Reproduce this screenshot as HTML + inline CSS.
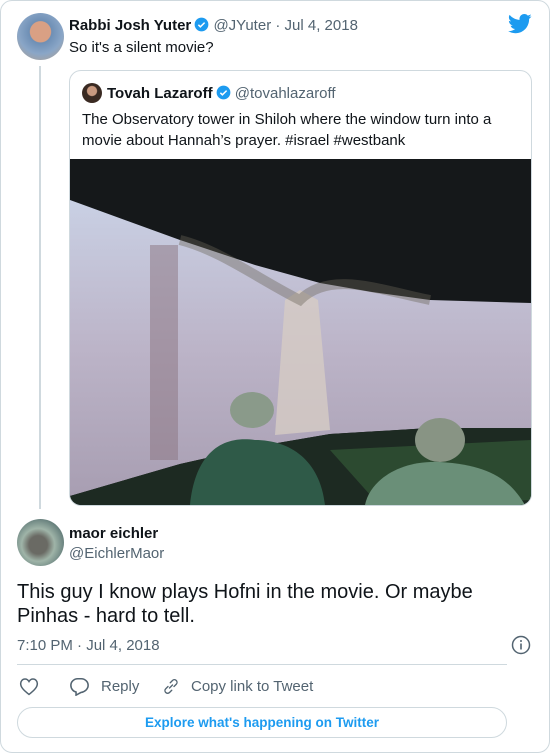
<!DOCTYPE html>
<html><head><meta charset="utf-8"><style>
*{margin:0;padding:0;box-sizing:border-box}
body{width:550px;height:755px;background:#fff;font-family:"Liberation Sans",Arial,sans-serif;color:#0f1419;position:relative;overflow:hidden}
.card{position:absolute;left:0;top:0;width:550px;height:753px;border:1px solid #cfd9de;border-radius:12px}
.abs{position:absolute;white-space:nowrap}
.av{position:absolute;border-radius:50%;overflow:hidden}
.gray{color:#536471}
.ver{display:inline-block;width:15px;height:15px;vertical-align:-2px;margin-left:3px}
</style></head><body>
<div class="card"></div>
<div class="av" style="left:17px;top:13px;width:47px;height:47px;background:radial-gradient(circle at 50% 40%,#d9a084 0 28%,#6e8fb5 30%,#8aa6c7 60%,#b5a089 100%)"></div>
<div class="abs" style="left:69px;top:17px;font-size:15px"><b>Rabbi Josh Yuter</b><svg class="ver" viewBox="0 0 24 24"><circle cx="12" cy="12" r="11" fill="#1d9bf0"/><path d="M7 12.5l3.2 3.2L17 9" stroke="#fff" stroke-width="2.4" fill="none"/></svg> <span class="gray">@JYuter · Jul 4, 2018</span></div>
<div class="abs" style="left:69px;top:39px;font-size:15px">So it's a silent movie?</div>
<svg class="abs" style="left:508px;top:14px" width="24" height="20" viewBox="0 0 24 20"><path fill="#1d9bf0" d="M23.6 2.3c-.9.4-1.8.6-2.8.8 1-.6 1.8-1.5 2.1-2.7-.9.6-2 1-3.1 1.2C19 .6 17.7 0 16.3 0c-2.7 0-4.8 2.2-4.8 4.8 0 .4 0 .8.1 1.1C7.6 5.7 4 3.8 1.6.9c-.4.7-.7 1.5-.7 2.4 0 1.700.9 3.2 2.2 4-.8 0-1.5-.2-2.2-.6v.1c0 2.3 1.7 4.3 3.9 4.7-.4.1-.8.2-1.3.2-.3 0-.6 0-.9-.1.6 1.9 2.4 3.3 4.5 3.4-1.7 1.3-3.700 2.1-6 2.1-.4 0-.8 0-1.1-.1 2.1 1.4 4.7 2.2 7.4 2.2 8.9 0 13.7-7.4 13.7-13.7v-.6c.9-.7 1.7-1.5 2.3-2.5z"/></svg>
<div class="abs" style="left:39px;top:66px;width:2px;height:443px;background:#cfd9de"></div>
<div class="abs" style="left:69px;top:70px;width:463px;height:436px;border:1px solid #cfd9de;border-radius:12px;overflow:hidden">
 <div class="av" style="left:12px;top:12px;width:20px;height:20px;background:radial-gradient(circle at 50% 40%,#c99a80 0 30%,#3a2a22 35%)"></div>
 <div class="abs" style="left:37px;top:14px;font-size:15px"><b>Tovah Lazaroff</b><svg class="ver" viewBox="0 0 24 24"><circle cx="12" cy="12" r="11" fill="#1d9bf0"/><path d="M7 12.5l3.2 3.2L17 9" stroke="#fff" stroke-width="2.4" fill="none"/></svg> <span class="gray">@tovahlazaroff</span></div>
 <div class="abs" style="left:12px;top:38px;font-size:15px;line-height:21px;white-space:normal;width:440px">The Observatory tower in Shiloh where the window turn into a movie about Hannah’s prayer. #israel #westbank</div>
 <svg class="abs" style="left:0;top:88px" width="462" height="347" viewBox="70 159 462 347">
  <defs><linearGradient id="sc" x1="0" y1="0" x2="0" y2="1"><stop offset="0" stop-color="#c9d0e4"/><stop offset=".5" stop-color="#bcb4c8"/><stop offset="1" stop-color="#a89eb2"/></linearGradient></defs>
  <rect x="70" y="159" width="462" height="347" fill="#15181a"/>
  <polygon points="70,200 180,240 255,265 320,283 372,292 430,300 531,303 531,428 430,428 330,434 260,446 180,464 70,496" fill="url(#sc)"/>
  <rect x="150" y="245" width="28" height="215" fill="#8a7480" opacity=".5"/>
  <polygon points="285,300 300,290 318,300 330,430 275,435" fill="#d6ccc4" opacity=".8"/>
  <path d="M180,240 C220,250 260,280 300,300 C330,270 380,290 430,300" stroke="#6a6458" stroke-width="10" fill="none" opacity=".4"/>
  <polygon points="70,496 180,464 260,446 330,434 430,428 531,428 531,506 70,506" fill="#1d2a22"/>
  <polygon points="330,450 531,440 531,500 380,506" fill="#2c4a30"/>
  <ellipse cx="252" cy="410" rx="22" ry="18" fill="#8a9a8a"/>
  <path d="M190,505 C195,455 220,435 255,440 C290,440 320,460 325,505Z" fill="#2f5a48"/>
  <ellipse cx="440" cy="440" rx="25" ry="22" fill="#889484"/>
  <path d="M365,505 C370,480 400,460 440,462 C490,465 510,480 525,505Z" fill="#6a8f78"/>
 </svg>
</div>
<div class="av" style="left:17px;top:519px;width:47px;height:47px;background:radial-gradient(circle at 45% 55%,#6a6a64 0 25%,#9fb4a8 45%,#2d4a50 100%)"></div>
<div class="abs" style="left:69px;top:525px;font-size:15px"><b>maor eichler</b></div>
<div class="abs gray" style="left:69px;top:545px;font-size:15px">@EichlerMaor</div>
<div class="abs" style="left:17px;top:580px;font-size:20px;line-height:24px">This guy I know plays Hofni in the movie. Or maybe<br>Pinhas - hard to tell.</div>
<div class="abs gray" style="left:17px;top:637px;font-size:15px">7:10 PM · Jul 4, 2018</div>
<svg class="abs" style="left:511px;top:635px" width="20" height="20" viewBox="0 0 20 20"><circle cx="10" cy="10" r="8.5" fill="none" stroke="#536471" stroke-width="1.5"/><rect x="9.2" y="8.5" width="1.6" height="6" fill="#536471"/><circle cx="10" cy="6" r="1" fill="#536471"/></svg>
<div class="abs" style="left:17px;top:664px;width:490px;height:1px;background:#cfd9de"></div>
<svg class="abs" style="left:19px;top:677px" width="20" height="19" viewBox="0 0 24 22"><path d="M12 20.5C5 15 2 11.5 2 7.5 2 4.5 4.3 2 7.2 2c2 0 3.7 1.2 4.8 3 1.1-1.8 2.8-3 4.8-3C19.7 2 22 4.5 22 7.5c0 4-3 7.5-10 13z" fill="none" stroke="#536471" stroke-width="1.8"/></svg>
<svg class="abs" style="left:69px;top:677px" width="21" height="19" viewBox="0 0 24 22"><path d="M10 2h4c4.4 0 8 3.4 8 7.6 0 4.6-4 7.6-8.5 8.4L8 21v-3.6C4.5 16.6 2 13.4 2 9.6 2 5.4 5.6 2 10 2z" fill="none" stroke="#536471" stroke-width="1.8"/></svg>
<div class="abs gray" style="left:101px;top:678px;font-size:15px">Reply</div>
<svg class="abs" style="left:162px;top:677px" width="18" height="19" viewBox="0 0 24 24"><path d="M10 14l4-4M8 12l-3 3a3.5 3.5 0 005 5l3-3M16 12l3-3a3.5 3.5 0 00-5-5l-3 3" fill="none" stroke="#536471" stroke-width="1.8" stroke-linecap="round"/></svg>
<div class="abs gray" style="left:191px;top:678px;font-size:15px">Copy link to Tweet</div>
<div class="abs" style="left:17px;top:707px;width:490px;height:31px;border:1px solid #cfd9de;border-radius:16px;text-align:center;line-height:29px;color:#1d9bf0;font-weight:bold;font-size:13.5px">Explore what's happening on Twitter</div>
</body></html>
